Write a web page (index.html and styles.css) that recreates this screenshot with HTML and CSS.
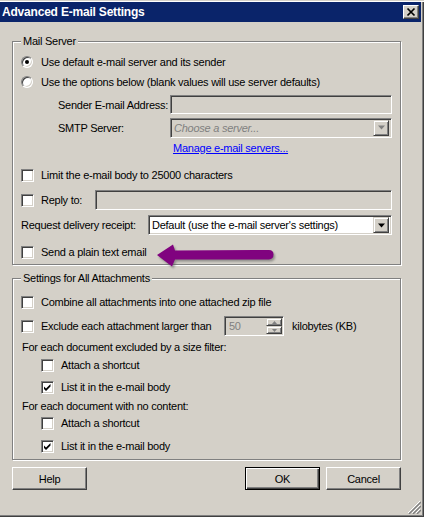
FILE: index.html
```html
<!DOCTYPE html>
<html lang="en">
<head>
  <meta charset="UTF-8">
  <meta name="viewport" content="width=device-width, initial-scale=1.0">
  <title>Advanced E-mail Settings</title>
  <link rel="stylesheet" href="styles.css">
</head>
<body>
  <div class="window">
    <div class="titlebar">
      <span class="title">Advanced E-mail Settings</span>
      <span class="close">
        <svg width="14" height="12" viewBox="0 0 14 12"><path d="M3.5 2.5 L10.5 9.5 M10.5 2.5 L3.5 9.5" stroke="#000" stroke-width="1.7" fill="none"/></svg>
      </span>
    </div>

    <div class="client">
      <fieldset class="group">
        <legend>Mail Server</legend>
        <div class="row first"><span class="radio on"></span>Use default e-mail server and its sender</div>
        <div class="row"><span class="radio"></span>Use the options below (blank values will use server defaults)</div>
        <div class="row field"><span class="field-label">Sender E-mail Address:</span><span class="edit off"></span></div>
        <div class="row field">
          <span class="field-label">SMTP Server:</span>
          <span class="combo off">
            <span class="combo-text">Choose a server...</span>
            <span class="drop"><svg width="7" height="5" viewBox="0 0 7 5"><polygon points="0,0.5 7,0.5 3.5,4.5" fill="#808080"/></svg></span>
          </span>
        </div>
        <div class="row link-row"><a href="#">Manage e-mail servers...</a></div>
        <div class="row check-row gap7"><span class="check"></span>Limit the e-mail body to 25000 characters</div>
        <div class="row check-row gap3"><span class="check"></span><span class="reply-label">Reply to:</span><span class="edit off tall"></span></div>
        <div class="row check-row gap3">
          <span class="receipt-label">Request delivery receipt:</span>
          <span class="combo">
            <span class="combo-text">Default (use the e-mail server's settings)</span>
            <span class="drop"><svg width="7" height="5" viewBox="0 0 7 5"><polygon points="0,0.5 7,0.5 3.5,4.5" fill="#000"/></svg></span>
          </span>
        </div>
        <div class="row check-row gap5"><span class="check"></span>Send a plain text email</div>
      </fieldset>

      <fieldset class="group second">
        <legend>Settings for All Attachments</legend>
        <div class="row check-row gap6"><span class="check"></span>Combine all attachments into one attached zip file</div>
        <div class="row check-row exclude">
          <span class="check"></span><span class="exclude-label">Exclude each attachment larger than</span>
          <span class="spin">
            <span class="spin-text">50</span>
            <span class="spin-btns">
              <span class="spin-btn"><svg width="5" height="3" viewBox="0 0 5 3"><polygon points="2.5,0 5,3 0,3" fill="#808080"/></svg></span>
              <span class="spin-btn"><svg width="5" height="3" viewBox="0 0 5 3"><polygon points="0,0 5,0 2.5,3" fill="#808080"/></svg></span>
            </span>
          </span>
          <span class="unit">kilobytes (KB)</span>
        </div>
        <div class="row caption">For each document excluded by a size filter:</div>
        <div class="row sub"><span class="check"></span>Attach a shortcut</div>
        <div class="row sub list"><span class="check"><svg width="11" height="11" viewBox="0 0 11 11"><polygon points="2,4.5 4,6.5 8.5,2 8.5,4.5 4,9 2,7" fill="#000"/></svg></span>List it in the e-mail body</div>
        <div class="row caption short">For each document with no content:</div>
        <div class="row sub"><span class="check"></span>Attach a shortcut</div>
        <div class="row sub list last"><span class="check"><svg width="11" height="11" viewBox="0 0 11 11"><polygon points="2,4.5 4,6.5 8.5,2 8.5,4.5 4,9 2,7" fill="#000"/></svg></span>List it in the e-mail body</div>
      </fieldset>

      <div class="buttons">
        <span class="btn">Help</span>
        <span class="spacer"></span>
        <span class="btn default">OK</span>
        <span class="btn">Cancel</span>
      </div>
    </div>

    <svg class="note-arrow" width="130" height="32" viewBox="0 0 130 32">
      <defs>
        <filter id="soft" x="-10%" y="-30%" width="120%" height="160%">
          <feGaussianBlur stdDeviation="1"/>
        </filter>
      </defs>
      <path d="M7 14 L23 3.5 L25 9.5 L119 9 Q123.5 9 123.5 13.5 Q123.5 18 119 18.5 L25 18.5 L22 25.5 Z" fill="#555" opacity="0.55" filter="url(#soft)" transform="translate(1.5 2)"/>
      <path d="M7 14 L23 3.5 L25 9.5 L119 9 Q123.5 9 123.5 13.5 Q123.5 18 119 18.5 L25 18.5 L22 25.5 Z" fill="#80037f"/>
    </svg>

    <svg class="grip" width="13" height="13" viewBox="0 0 13 13">
      <path d="M12 0 L0 12 M12 4 L4 12 M12 8 L8 12" stroke="#fff" stroke-width="1" fill="none"/>
      <path d="M13 1 L1 13 M13 5 L5 13 M13 9 L9 13" stroke="#808080" stroke-width="1.4" fill="none"/>
    </svg>
  </div>
</body>
</html>
```

FILE: styles.css
```css
* {
  box-sizing: border-box;
}
body {
  margin: 0;
  background: #fff;
  font-family: "Liberation Sans", Arial, sans-serif;
  font-size: 11px;
  letter-spacing: -0.25px;
  color: #000;
}
.window {
  position: relative;
  width: 424px;
  height: 517px;
  background: #d4d0c8;
  border-top: 1px solid #d4d0c8;
  padding-top: 1px;
  box-shadow: inset 0 1px 0 #fff, inset -1px -1px 0 #404040, inset -2px -2px 0 #808080;
}
.titlebar {
  height: 20px;
  margin-right: 3px;
  background: #0a246a;
  display: flex;
  align-items: center;
  justify-content: space-between;
  padding-left: 2px;
}
.title {
  color: #fff;
  font-weight: bold;
  font-size: 12px;
  letter-spacing: -0.2px;
}
.close {
  width: 16px;
  height: 14px;
  margin-right: 2px;
  background: #d4d0c8;
  border: 1px solid;
  border-color: #fff #404040 #404040 #fff;
  box-shadow: inset -1px -1px 0 #808080;
  display: flex;
  align-items: center;
  justify-content: center;
}
.client {
  padding: 12px 0 0 12px;
}
.group {
  margin: 0;
  width: 389px;
  min-width: 0;
  border: 1px solid #808080;
  padding: 0 8px 1px 8px;
  box-shadow: 1px 1px 0 #fff, inset 1px 1px 0 #fff;
}
.group.second {
  margin-top: 6px;
  padding-bottom: 2px;
}
legend {
  padding: 0 2px;
  line-height: 14px;
  background: #d4d0c8;
}
.row {
  display: flex;
  align-items: center;
  height: 20px;
  white-space: nowrap;
}
.row.first {
  margin-top: 4px;
}
.row.field {
  height: 23px;
}
.row.field:nth-of-type(3) {
  margin-top: 1px;
}
.field-label {
  width: 112px;
  padding-left: 37px;
  flex: none;
  box-sizing: content-box;
}
.link-row {
  height: 18px;
  padding-left: 152px;
}
.link-row a {
  color: #0000ff;
}
.check-row {
  height: 22px;
}
.gap3 { margin-top: 3px; }
.gap5 { margin-top: 5px; }
.gap6 { margin-top: 6px; }
.gap7 { margin-top: 7px; }

.radio {
  width: 12px;
  height: 12px;
  flex: none;
  margin-right: 8px;
  border-radius: 50%;
  background: #fff;
  border: 1px solid;
  border-color: #808080 #fff #fff #808080;
  box-shadow: inset 1px 1px 0 #404040, inset -1px -1px 0 #d4d0c8;
  display: flex;
  align-items: center;
  justify-content: center;
}
.radio.on::after {
  content: "";
  width: 4px;
  height: 4px;
  border-radius: 50%;
  background: #000;
}
.check {
  width: 13px;
  height: 13px;
  flex: none;
  margin-right: 7px;
  background: #fff;
  border: 1px solid;
  border-color: #808080 #fff #fff #808080;
  box-shadow: inset 1px 1px 0 #404040, inset -1px -1px 0 #d4d0c8;
  display: flex;
}
.edit {
  flex: 1;
  height: 19px;
  background: #fff;
  border: 1px solid;
  border-color: #808080 #fff #fff #808080;
  box-shadow: inset 1px 1px 0 #404040, inset -1px -1px 0 #d4d0c8;
}
.edit.tall {
  height: 20px;
}
.off {
  background: #d4d0c8;
}
.combo {
  flex: 1;
  height: 20px;
  display: flex;
  align-items: center;
  background: #fff;
  border: 1px solid;
  border-color: #808080 #fff #fff #808080;
  box-shadow: inset 1px 1px 0 #404040, inset -1px -1px 0 #d4d0c8;
  padding: 2px 2px 2px 3px;
}
.combo.off {
  background: #d4d0c8;
}
.combo-text {
  flex: 1;
}
.combo.off .combo-text {
  color: #808080;
  font-style: italic;
}
.drop {
  width: 16px;
  height: 16px;
  flex: none;
  background: #d4d0c8;
  border: 1px solid;
  border-color: #d4d0c8 #404040 #404040 #d4d0c8;
  box-shadow: inset 1px 1px 0 #fff, inset -1px -1px 0 #808080;
  display: flex;
  align-items: center;
  justify-content: center;
}
.reply-label {
  width: 54px;
  flex: none;
}
.receipt-label {
  width: 127px;
  flex: none;
}
.exclude {
  height: 24px;
  margin-top: 1px;
}
.exclude-label {
  width: 183px;
  flex: none;
}
.spin {
  width: 60px;
  height: 20px;
  flex: none;
  display: flex;
  background: #d4d0c8;
  border: 1px solid;
  border-color: #808080 #fff #fff #808080;
  box-shadow: inset 1px 1px 0 #404040, inset -1px -1px 0 #d4d0c8;
  padding: 1px 1px 1px 4px;
}
.spin-text {
  flex: 1;
  color: #808080;
  display: flex;
  align-items: center;
}
.spin-btns {
  width: 16px;
  display: flex;
  flex-direction: column;
}
.spin-btn {
  flex: 1;
  background: #d4d0c8;
  border: 1px solid;
  border-color: #d4d0c8 #404040 #404040 #d4d0c8;
  box-shadow: inset 1px 1px 0 #fff, inset -1px -1px 0 #808080;
  display: flex;
  align-items: center;
  justify-content: center;
}
.unit {
  margin-left: 8px;
}
.caption {
  height: 18px;
  padding-left: 1px;
}
.caption.short {
  height: 17px;
}
.sub {
  height: 18px;
  padding-left: 20px;
}
.sub.list {
  margin-top: 3px;
  height: 20px;
}
.sub.list.last {
  height: 22px;
}
.buttons {
  width: 389px;
  margin-top: 7px;
  display: flex;
  gap: 6px;
}
.spacer {
  flex: 1;
}
.btn {
  width: 75px;
  height: 23px;
  background: #d4d0c8;
  border: 1px solid;
  border-color: #fff #404040 #404040 #fff;
  box-shadow: inset -1px -1px 0 #808080;
  display: flex;
  align-items: center;
  justify-content: center;
}
.btn.default {
  border-color: #000;
  box-shadow: inset 1px 1px 0 #fff, inset -1px -1px 0 #404040, inset -2px -2px 0 #808080;
}
.note-arrow {
  position: absolute;
  left: 150px;
  top: 240px;
}
.grip {
  position: absolute;
  right: 3px;
  bottom: 3px;
}
```
